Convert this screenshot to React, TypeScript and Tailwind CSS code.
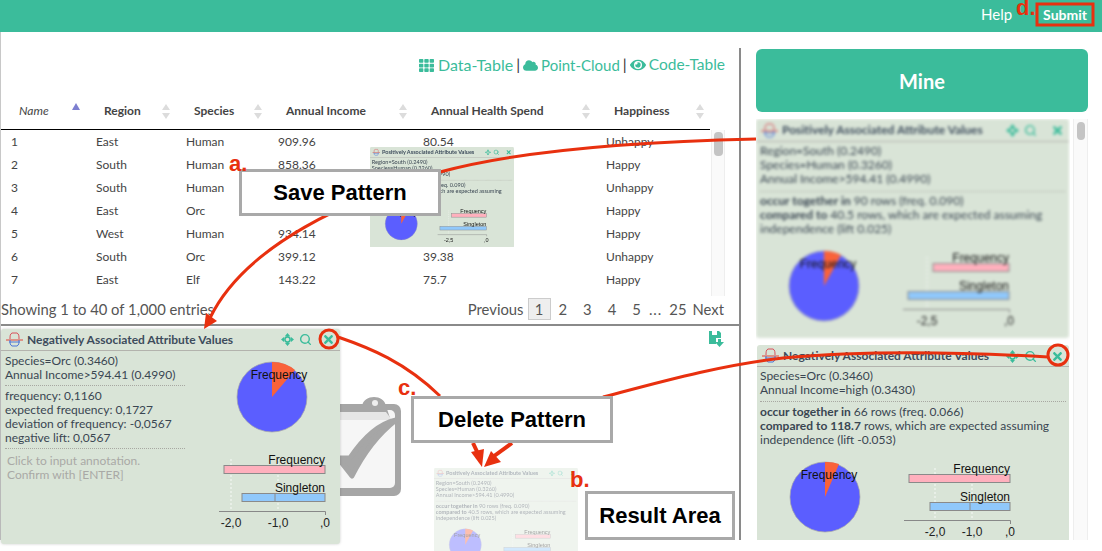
import { FaCloud, FaEye, FaTh, FaTimes } from "react-icons/fa";
import { Search } from "lucide-react";

const rows = [
  ["1", "East", "Human", "909.96", "80.54", "Unhappy"],
  ["2", "South", "Human", "858.36", "", "Happy"],
  ["3", "South", "Human", "", "", "Unhappy"],
  ["4", "East", "Orc", "", "", "Happy"],
  ["5", "West", "Human", "934.14", "", "Happy"],
  ["6", "South", "Orc", "399.12", "39.38", "Unhappy"],
  ["7", "East", "Elf", "143.22", "75.7", "Happy"],
];

const columns = [
  { name: "Name", width: "w-[85px]", italic: true },
  { name: "Region", width: "w-[90px]" },
  { name: "Species", width: "w-[92px]" },
  { name: "Annual Income", width: "w-[145px]" },
  { name: "Annual Health Spend", width: "w-[183px]" },
  { name: "Happiness", width: "w-[114px]" },
];

function SortIcon({ active }: { active?: boolean }) {
  return (
    <svg width="10" height="18" viewBox="0 0 10 18">
      {active ? (
        <path d="M5 1 L9 8 L1 8 Z" fill="#7d7fd0" />
      ) : (
        <>
          <path d="M5 2 L9 8 L1 8 Z" fill="#dcdcdc" />
          <path d="M5 17 L9 11 L1 11 Z" fill="#dcdcdc" />
        </>
      )}
    </svg>
  );
}

function Knot() {
  return (
    <svg width="17" height="17" viewBox="0 0 17 17" fill="none">
      <path d="M0 9 H17" stroke="#e0453a" strokeWidth="1" />
      <path d="M3 11 H14" stroke="#4a74d8" strokeWidth="1" />
      <path d="M4 8 C4 5 4 3 6 2 H11 C13 3 13 5 13 8" stroke="#d8505a" strokeWidth="1" />
      <path d="M4 9 C4 12 4 14 6 15 H11 C13 14 13 12 13 9" stroke="#4a74d8" strokeWidth="1" />
    </svg>
  );
}

function MoveIcon() {
  return (
    <svg width="13" height="13" viewBox="0 0 13 13" fill="currentColor">
      <path d="M6.5 0 L9 3 H4 Z M6.5 13 L9 10 H4 Z M0 6.5 L3 4 V9 Z M13 6.5 L10 4 V9 Z" />
      <circle cx="6.5" cy="6.5" r="2.6" fill="none" stroke="currentColor" strokeWidth="1.6" />
    </svg>
  );
}

function CardHeader({ title, height }: { title: string; height: string }) {
  return (
    <div className={`flex items-center border-b border-[#b3b3ad] pl-[5px] ${height}`}>
      <Knot />
      <span className="ml-[4px] text-[12px] font-bold text-[#3d4c5c] whitespace-nowrap">{title}</span>
    </div>
  );
}

function Pie({ x, y, labelX }: { x: number; y: number; labelX: number }) {
  return (
    <svg width="84" height="84" viewBox="0 0 84 84" className="shrink-0">
      <circle cx="42" cy="42" r="35" fill="#5b5eff" stroke="#a3a3a8" strokeWidth="0.7" />
      <path d={`M42 42 L42 7 A35 35 0 0 1 ${x} ${y} Z`} fill="#f9623a" />
      <text x={labelX} y="24" fontSize="12" textAnchor="middle" fill="#111" fontFamily="Liberation Sans, sans-serif">
        Frequency
      </text>
    </svg>
  );
}

function Bars({
  pinkX,
  blueX,
  ticks,
  mid,
}: {
  pinkX: number;
  blueX: number;
  ticks: { x: number; label: string }[];
  mid?: number;
}) {
  return (
    <svg width="125" height="72" viewBox="0 0 125 72" className="overflow-visible">
      {ticks.slice(0, -1).map((t) => (
        <line key={t.x} x1={t.x} x2={t.x} y1="0" y2="52" stroke="#fff" strokeWidth="0.8" strokeDasharray="2 2" />
      ))}
      <rect x={pinkX} y="6.5" width={110 - pinkX} height="8" fill="#ffb0bd" stroke="#8a8a8a" />
      <rect x={blueX} y="34.5" width={110 - blueX} height="8" fill="#90c8fb" stroke="#8a8a8a" />
      {mid !== undefined && <line x1={mid} x2={mid} y1="34" y2="43" stroke="#8a8a8a" />}
      <text x="110" y="5" fontSize="12" textAnchor="end" fill="#111" fontFamily="Liberation Sans, sans-serif">Frequency</text>
      <text x="110" y="33" fontSize="12" textAnchor="end" fill="#111" fontFamily="Liberation Sans, sans-serif">Singleton</text>
      <path d="M4 52.5 H110.5 V56" stroke="#888" fill="none" />
      {ticks.map((t) => (
        <text key={t.label} x={t.x} y="68" fontSize="12" textAnchor="middle" fill="#222" fontFamily="Liberation Sans, sans-serif">
          {t.label}
        </text>
      ))}
    </svg>
  );
}

function CardIcons() {
  return (
    <div className="absolute top-[5px] right-[5px] flex items-center gap-[5px] text-[#3bbc9b]">
      <MoveIcon />
      <Search size={13} strokeWidth={2.6} />
      <FaTimes size={13} className="ml-[9px]" />
    </div>
  );
}

function PositiveCard() {
  return (
    <div className="relative w-[313px] h-[219px] rounded-[3px] bg-[#d9e4d7] text-[12px] leading-[14px] text-[#3a4652] overflow-hidden">
      <CardHeader title="Positively Associated Attribute Values" height="h-[23px]" />
      <CardIcons />
      <div className="px-[4px] pt-[2px]">
        <p>Region=South (0.2490)</p>
        <p>Species=Human (0.3260)</p>
        <p>Annual Income&gt;594.41 (0.4990)</p>
        <div className="mt-[5px] mb-[2px] border-t border-dotted border-[#a8a8a2]" />
        <p><b>occur together in</b> 90 rows (freq. 0.090)</p>
        <p><b>compared to</b> 40.5 rows, which are expected assuming</p>
        <p>independence (lift 0.025)</p>
      </div>
      <div className="mt-[8px] flex items-start">
        <div className="ml-[26px]">
          <Pie x={59} y={11} labelX={46} />
        </div>
        <div className="ml-[33px] mt-[13px]">
          <Bars pinkX={34} blueX={9} ticks={[{ x: 28, label: "-2,5" }, { x: 110, label: ",0" }]} />
        </div>
      </div>
    </div>
  );
}

function NegativeCard() {
  return (
    <div className="relative w-[312px] h-[200px] ml-px rounded-[3px] bg-[#d9e4d7] text-[12px] leading-[14px] text-[#3a4652]">
      <CardHeader title="Negatively Associated Attribute Values" height="h-[22px]" />
      <CardIcons />
      <div className="px-[3px] pt-[2px]">
        <p>Species=Orc (0.3460)</p>
        <p>Annual Income=high (0.3430)</p>
        <div className="mt-[4px] mb-[3px] border-t border-dotted border-[#a8a8a2]" />
        <p><b>occur together in</b> 66 rows (freq. 0.066)</p>
        <p><b>compared to 118.7</b> rows, which are expected assuming</p>
        <p>independence (lift -0.053)</p>
      </div>
      <div className="mt-[8px] flex items-start">
        <div className="ml-[26px]">
          <Pie x={56} y={9} labelX={46} />
        </div>
        <div className="ml-[33px] mt-[13px]">
          <Bars
            pinkX={9}
            blueX={30}
            mid={70}
            ticks={[{ x: 35, label: "-2,0" }, { x: 72, label: "-1,0" }, { x: 110, label: ",0" }]}
          />
        </div>
      </div>
    </div>
  );
}

function ResultCard() {
  return (
    <div className="relative w-[339px] h-[215px] rounded-[3px] bg-[#d9e4d7] text-[12px] leading-[14px] text-[#3a4652] shadow-[0_0_3px_rgba(0,0,0,0.2)]">
      <CardHeader title="Negatively Associated Attribute Values" height="h-[22px]" />
      <div className="absolute top-[4px] right-[28px] flex items-center gap-[5px] text-[#3bbc9b]">
        <MoveIcon />
        <Search size={13} strokeWidth={2.6} />
      </div>
      <div className="absolute top-[4px] right-[5px] text-[#3bbc9b]">
        <FaTimes size={13} />
      </div>
      <div className="flex">
        <div className="w-[184px] shrink-0 pl-[4px] pt-[3px]">
          <p>Species=Orc (0.3460)</p>
          <p>Annual Income&gt;594.41 (0.4990)</p>
          <div className="my-[3px] border-t border-dotted border-[#a8a8a2]" />
          <p>frequency: 0,1160</p>
          <p>expected frequency: 0,1727</p>
          <p>deviation of frequency: -0,0567</p>
          <p>negative lift: 0,0567</p>
          <div className="my-[3px] border-t border-dotted border-[#a8a8a2]" />
          <p className="pl-[2px] pt-[2px] text-[#a9a9a6]">Click to input annotation.</p>
          <p className="pl-[2px] text-[#a9a9a6]">Confirm with [ENTER]</p>
        </div>
        <div className="shrink-0 pt-[4px] pl-[45px]">
          <Pie x={65} y={15} labelX={49} />
          <div className="-ml-[15px] mt-[20px]">
            <Bars
              pinkX={9}
              blueX={27}
              mid={60}
              ticks={[{ x: 16, label: "-2,0" }, { x: 63, label: "-1,0" }, { x: 110, label: ",0" }]}
            />
          </div>
        </div>
      </div>
    </div>
  );
}

function Clipboard() {
  return (
    <svg width="70" height="102" viewBox="0 0 70 102">
      <rect x="-20" y="8" width="81" height="92" rx="7" fill="#a6a6a6" />
      <rect x="-20" y="14" width="75" height="78" rx="5" fill="#f6f6f6" />
      <path d="M22 10 C24 -2 44 -2 46 10 L50 22 H-4 V10 Z" fill="#a6a6a6" />
      <path d="M-4 16 H46 L52 24 H-4 Z" fill="#e6e6e6" />
      <circle cx="35" cy="7" r="3" fill="#eee" />
      <path d="M-2 62 L12 80 C24 56 38 38 56 24 C38 28 22 44 10 62 Z" fill="#a6a6a6" stroke="#a6a6a6" strokeWidth="5" strokeLinejoin="round" />
    </svg>
  );
}

function Arrows() {
  return (
    <svg width="1102" height="551" viewBox="0 0 1102 551" className="absolute inset-0 pointer-events-none" fill="none">
      <g stroke="#e8300f" strokeWidth="3">
        <path d="M756 139 C620 142 510 153 440 172 C350 198 245 245 210 318" />
        <path d="M338 337 C370 348 405 362 440 396" />
        <path d="M1048 357 C960 352 860 351 783 358 C720 365 660 382 603 397" />
        <path d="M473 443 L480 458" strokeWidth="4" />
        <path d="M512 443 L490 459" strokeWidth="4" />
        <circle cx="329" cy="339" r="9" />
        <circle cx="1058" cy="355" r="10" />
        <rect x="1037" y="4" width="56" height="21" />
      </g>
      <path d="M204 329 L206 313 L217 321 Z" fill="#e8300f" />
      <path d="M482 467 L471 452 L484 449 Z" fill="#e8300f" />
      <path d="M484 467 L491 451 L501 462 Z" fill="#e8300f" />
    </svg>
  );
}

function Callout({ label, className }: { label: string; className: string }) {
  return (
    <div className={`absolute flex items-center justify-center border-[3px] border-[#a9a9a9] bg-white font-['Liberation_Sans',sans-serif] text-[22px] font-bold text-black ${className}`}>
      {label}
    </div>
  );
}

function Letter({ label, className }: { label: string; className: string }) {
  return (
    <span className={`absolute font-['Liberation_Sans',sans-serif] text-[22px] leading-[16px] font-bold text-[#e8300f] ${className}`}>
      {label}
    </span>
  );
}

export default function App() {
  return (
    <div className="relative w-[1102px] h-[551px] overflow-hidden bg-white font-['Lato',sans-serif]">
      <header className="flex h-[32px] items-center justify-end bg-[#3bbc9b] pb-[3px] text-white">
        <span className="text-[15px]">Help</span>
        <span className="ml-[31px] mr-[15px] text-[14px] font-bold">Submit</span>
      </header>

      <main className="flex h-[508px]">
        <section className="flex w-[739px] shrink-0 flex-col border-l border-[#c8c8c8]">
          <div className="flex h-[264px] shrink-0 flex-col">
            <div className="flex h-[64px] shrink-0 items-center justify-end gap-[3px] pr-[14px] pt-[2px] text-[15.5px] text-[#3bbc9b]">
              <FaTh size={15} />
              <span className="ml-[1px] text-[16px]">Data-Table</span>
              <span className="text-[#333]">|</span>
              <FaCloud size={15} />
              <span className="text-[15px]">Point-Cloud</span>
              <span className="text-[#333]">|</span>
              <FaEye size={16} />
              <span>Code-Table</span>
            </div>

            <div className="flex h-[34px] w-[709px] shrink-0 items-center border-b border-black pb-[4px] text-[12px] font-bold text-[#444]">
              {columns.map((col) => (
                <div key={col.name} className={`flex items-center justify-between pl-[18px] pr-[5px] ${col.width}`}>
                  <span className={col.italic ? "italic font-normal" : ""}>{col.name}</span>
                  <SortIcon active={col.italic} />
                </div>
              ))}
            </div>

            <div className="flex min-h-0 flex-1">
              <table className="w-[709px] table-fixed self-start text-[12px] text-[#444]">
                <tbody>
                  {rows.map((row) => (
                    <tr key={row[0]} className="h-[23px]">
                      <td className="w-[85px] pl-[10px]">{row[0]}</td>
                      <td className="w-[90px] pl-[10px]">{row[1]}</td>
                      <td className="w-[92px] pl-[10px]">{row[2]}</td>
                      <td className="w-[145px] pl-[10px]">{row[3]}</td>
                      <td className="w-[183px] pl-[10px]">{row[4]}</td>
                      <td className="w-[114px] pl-[10px]">{row[5]}</td>
                    </tr>
                  ))}
                </tbody>
              </table>
              <div className="ml-[1px] w-[14px] border-x border-[#eee] bg-[#fafafa] pt-[2px]">
                <div className="mx-auto h-[24px] w-[9px] rounded-[4px] bg-[#c4c4c4]" />
              </div>
            </div>
          </div>

          <div className="flex h-[28px] shrink-0 items-center justify-between pr-[15px] pb-[2px] text-[14.8px] text-[#555]">
            <span>Showing 1 to 40 of 1,000 entries</span>
            <div className="flex items-center">
              <span>Previous</span>
              <span className="ml-[4px] flex h-[22px] w-[23px] items-center justify-center border border-[#ccc] bg-[#eee]">1</span>
              <span className="ml-[8px]">2</span>
              <span className="ml-[16px]">3</span>
              <span className="ml-[16px]">4</span>
              <span className="ml-[16px]">5</span>
              <span className="ml-[8px] tracking-[1px]">...</span>
              <span className="ml-[7px]">25</span>
              <span className="ml-[6px]">Next</span>
            </div>
          </div>

          <div className="relative flex-1 border-t-2 border-[#8a8a8a] pt-[3px]">
            <div className="absolute left-[339px] top-[70px]">
              <Clipboard />
            </div>
            <div className="absolute left-[433px] top-[142px] h-[83px] w-[144px] overflow-hidden opacity-40">
              <div className="origin-top-left scale-[0.46]">
                <PositiveCard />
              </div>
            </div>
            <div className="absolute right-[15px] top-[5px] text-[#3bbc9b]">
              <svg width="15" height="16" viewBox="0 0 15 16" fill="currentColor">
                <path d="M0 0 H3 V4 H8 V0 H10 L12 2 V7 H7 V13 H0 Z" />
                <path d="M9 8 H12 V11 H15 L10.5 16 L6 11 H9 Z" />
              </svg>
            </div>
            <div className="relative">
              <ResultCard />
            </div>
          </div>
        </section>

        <div className="mt-[16px] w-[2px] shrink-0 bg-[#8a8a8a]" />

        <aside className="flex min-w-0 flex-1 flex-col pl-[15px] pr-[14px] pt-[17px]">
          <button className="h-[63px] w-[332px] shrink-0 rounded-[6px] bg-[#3bbc9b] text-[20px] font-bold text-white">
            Mine
          </button>
          <div className="mt-[7px] flex min-h-0 flex-1">
            <div className="flex w-[314px] flex-col gap-[7px] overflow-hidden">
              <div className="shrink-0 blur-[1.4px]">
                <PositiveCard />
              </div>
              <div className="shrink-0">
                <NegativeCard />
              </div>
            </div>
            <div className="ml-[3px] w-[15px] border-x border-[#eee] bg-[#fafafa] pt-[3px]">
              <div className="mx-auto h-[18px] w-[8px] rounded-[4px] bg-[#c4c4c4]" />
            </div>
          </div>
        </aside>
      </main>

      <div className="absolute left-[370px] top-[147px] h-[100px] w-[144px] overflow-hidden">
        <div className="origin-top-left scale-[0.46]">
          <PositiveCard />
        </div>
      </div>

      <Arrows />

      <Callout label="Save Pattern" className="left-[239px] top-[169px] h-[47px] w-[202px]" />
      <Callout label="Delete Pattern" className="left-[411px] top-[396px] h-[47px] w-[202px]" />
      <Callout label="Result Area" className="left-[585px] top-[491px] h-[49px] w-[150px]" />

      <Letter label="a." className="left-[229px] top-[156px]" />
      <Letter label="b." className="left-[570px] top-[472px]" />
      <Letter label="c." className="left-[398px] top-[380px]" />
      <Letter label="d." className="left-[1016px] top-0" />
    </div>
  );
}
